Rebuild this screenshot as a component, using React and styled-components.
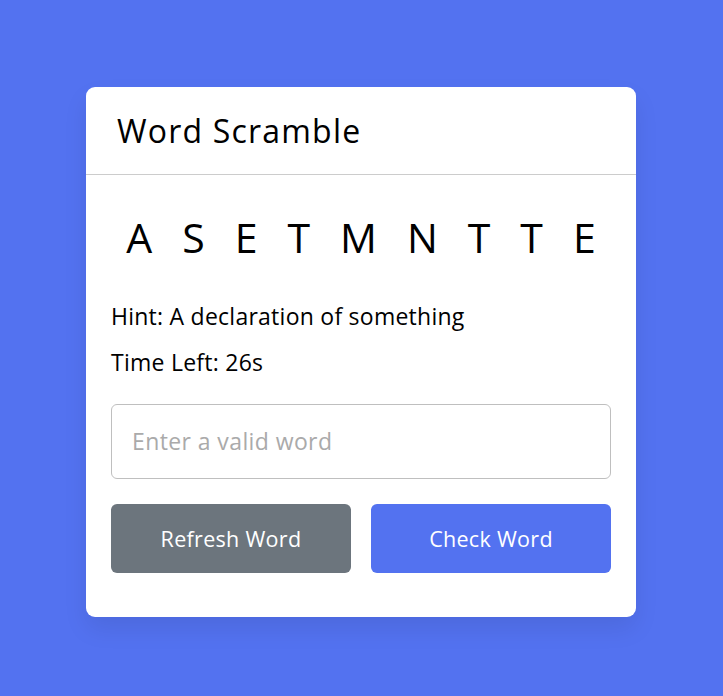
import { useState } from "react";
import styled, { createGlobalStyle } from "styled-components";

const GlobalStyle = createGlobalStyle`
  * {
    margin: 0;
    padding: 0;
    box-sizing: border-box;
  }
  body {
    font-family: "Open Sans", "Liberation Sans", sans-serif;
    background: #5372f0;
  }
`;

const Page = styled.div`
  display: flex;
  align-items: center;
  justify-content: center;
  min-height: 100vh;
  padding: 7px 13px 0 12px;
`;

const Card = styled.div`
  width: 550px;
  border-radius: 9px;
  background: #fff;
  box-shadow: 0 12px 25px rgba(0, 0, 0, 0.08);
`;

const Title = styled.h2`
  font-size: 32px;
  font-weight: 500;
  letter-spacing: 1.2px;
  line-height: 47px;
  color: #000;
  padding: 20px 31px;
  border-bottom: 1px solid #ccc;
`;

const Content = styled.div`
  margin: 31px 25px 44px;
`;

const Word = styled.p`
  font-size: 41px;
  font-weight: 500;
  line-height: 62px;
  text-align: center;
  letter-spacing: 30px;
  margin-right: -30px;
  text-transform: uppercase;
  user-select: none;
`;

const Details = styled.div`
  margin: 31px 0 25px;
  p {
    font-size: 23px;
    letter-spacing: 0.25px;
    line-height: 34px;
    margin-bottom: 12px;
  }
  p:last-child {
    margin-bottom: 0;
  }
  b {
    font-weight: 500;
  }
`;

const Input = styled.input`
  display: block;
  width: 100%;
  height: 75px;
  outline: none;
  padding: 0 20px;
  font-family: inherit;
  font-size: 23px;
  letter-spacing: 0.4px;
  border-radius: 6px;
  border: 1px solid #bfbfbf;
  &::placeholder {
    color: #aaa;
  }
`;

const Buttons = styled.div`
  display: flex;
  justify-content: space-between;
  margin-top: 25px;
`;

const Button = styled.button`
  width: calc(50% - 10px);
  padding: 19px 0;
  border: none;
  outline: none;
  border-radius: 6px;
  color: #fff;
  font-family: inherit;
  font-size: 21.5px;
  letter-spacing: 0.3px;
  line-height: 31px;
  cursor: pointer;
  background: ${(props) => (props.$variant === "refresh" ? "#6c757d" : "#5372f0")};
`;

export default function App() {
  const [guess, setGuess] = useState("");
  return (
    <>
      <GlobalStyle />
      <Page>
        <Card>
          <Title>Word Scramble</Title>
          <Content>
            <Word>asetmntte</Word>
            <Details>
              <p>Hint: A declaration of something</p>
              <p>
                Time Left: <b>26</b>s
              </p>
            </Details>
            <Input
              type="text"
              placeholder="Enter a valid word"
              value={guess}
              onChange={(e) => setGuess(e.target.value)}
            />
            <Buttons>
              <Button $variant="refresh">Refresh Word</Button>
              <Button $variant="check">Check Word</Button>
            </Buttons>
          </Content>
        </Card>
      </Page>
    </>
  );
}
